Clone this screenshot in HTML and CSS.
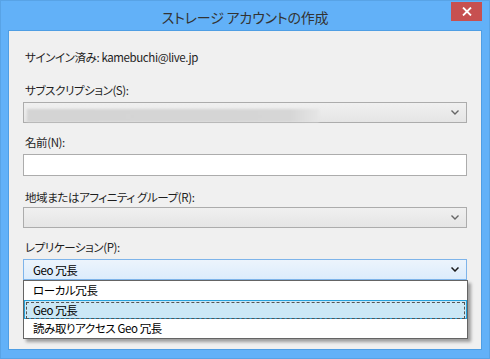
FILE: index.html
```html
<!DOCTYPE html>
<html lang="ja">

<head>
    <meta charset="UTF-8">
    <title>ストレージ アカウントの作成</title>
    <link rel="stylesheet" href="styles.css">
</head>

<body>
    <div class="window">
        <div class="titlebar">
            <span></span>
            <div class="title">ストレージ アカウントの作成</div>
            <div class="close-btn">
                <svg width="10" height="9" viewBox="0 0 10 9">
                    <path d="M1 0.5 L9 8.5 M9 0.5 L1 8.5" stroke="#fff" stroke-width="1.8" fill="none" />
                </svg>
            </div>
        </div>

        <div class="client">
            <div class="signin">サインイン済み: kamebuchi@live.jp</div>

            <div class="label label-sub">サブスクリプション(S):</div>
            <div class="combo combo-sub">
                <span class="redacted"></span>
                <svg class="chevron" width="8" height="5" viewBox="0 0 8 5">
                    <path d="M0.5 0.5 L4 4 L7.5 0.5" stroke="#666" stroke-width="1.4" fill="none" />
                </svg>
            </div>

            <div class="label label-name">名前(N):</div>
            <div class="textbox"></div>

            <div class="label label-region">地域またはアフィニティ グループ(R):</div>
            <div class="combo combo-region">
                <svg class="chevron" width="8" height="5" viewBox="0 0 8 5">
                    <path d="M0.5 0.5 L4 4 L7.5 0.5" stroke="#666" stroke-width="1.4" fill="none" />
                </svg>
            </div>

            <div class="label label-repl">レプリケーション(P):</div>
            <div class="repl-wrap">
                <div class="combo combo-active">
                    <span class="combo-text">Geo 冗長</span>
                    <svg class="chevron" width="8" height="5" viewBox="0 0 8 5">
                        <path d="M0.5 0.5 L4 4 L7.5 0.5" stroke="#1a1a1a" stroke-width="1.5" fill="none" />
                    </svg>
                </div>
                <ul class="dropdown">
                    <li>ローカル冗長</li>
                    <li class="selected"><span class="focus">Geo 冗長</span></li>
                    <li>読み取りアクセス Geo 冗長</li>
                </ul>
            </div>
        </div>
    </div>
</body>

</html>
```

FILE: styles.css
```css
body {
    margin: 0;
    padding: 0;
    font-family: "Noto Sans CJK JP", "Liberation Sans", sans-serif;
    font-feature-settings: "palt";
}

.window {
    width: 490px;
    height: 359px;
    box-sizing: border-box;
    background: #62b1f8;
    border: 1px solid #58a3e6;
    display: flex;
    flex-direction: column;
}

.titlebar {
    height: 29px;
    display: grid;
    grid-template-columns: 1fr auto 1fr;
}

.title {
    font-size: 14px;
    color: #333;
    line-height: 20px;
    padding-top: 6px;
    letter-spacing: -0.2px;
}

.close-btn {
    justify-self: end;
    width: 31px;
    height: 19px;
    margin-top: 1px;
    margin-right: 7px;
    background: #c75050;
    display: flex;
    align-items: center;
    justify-content: center;
}

.client {
    height: 320px;
    box-sizing: border-box;
    margin: 0 7px;
    background: #f0f0f0;
    border: 1px solid #4f9ee4;
    padding: 0 14px;
    font-size: 11.5px;
    letter-spacing: -0.4px;
    color: #000;
}

.signin,
.label {
    line-height: 16px;
    padding-left: 2px;
    color: #1e1e1e;
}

.signin {
    margin-top: 18px;
}

.label-sub {
    margin-top: 17px;
    margin-bottom: 4px;
}

.label-name {
    margin-top: 11px;
    margin-bottom: 4px;
}

.label-region {
    margin-top: 13px;
    margin-bottom: 2px;
}

.label-repl {
    margin-top: 11px;
    margin-bottom: 4px;
}

.combo {
    height: 21px;
    box-sizing: border-box;
    border: 1px solid #acacac;
    background: linear-gradient(#f0f0f0, #e5e5e5);
    display: flex;
    align-items: center;
    padding: 0 7px 0 9px;
    position: relative;
}

.chevron {
    margin-left: auto;
}

.redacted {
    position: absolute;
    left: 3px;
    top: 6px;
    width: 292px;
    height: 13px;
    background: linear-gradient(90deg, #d4d4d4 0%, #d6d6d6 90%, #e6e6e6 100%);
    filter: blur(1px);
}

.textbox {
    height: 22px;
    box-sizing: border-box;
    border: 1px solid #acacac;
    background: #fff;
}

.repl-wrap {
    position: relative;
}

.combo-active {
    border-color: #7eb4ea;
    background: linear-gradient(#ecf4fc, #dcecfc);
}

.combo-text {
    line-height: 18px;
}

.dropdown {
    position: absolute;
    left: 0;
    right: -1px;
    top: 21px;
    margin: 0;
    padding: 0;
    list-style: none;
    background: #fff;
    border: 1px solid #646464;
    box-shadow: 3px 3px 3px rgba(0, 0, 0, 0.35);
}

.dropdown li {
    height: 19px;
    line-height: 19px;
    padding-left: 9px;
    box-sizing: border-box;
}

.dropdown li.selected {
    background: #cbe8f6;
    border: 1px solid #26a0da;
    padding: 1px;
}

.focus {
    display: block;
    height: 15px;
    line-height: 15px;
    border: 1px dashed #555;
    padding-left: 6px;
}
```
